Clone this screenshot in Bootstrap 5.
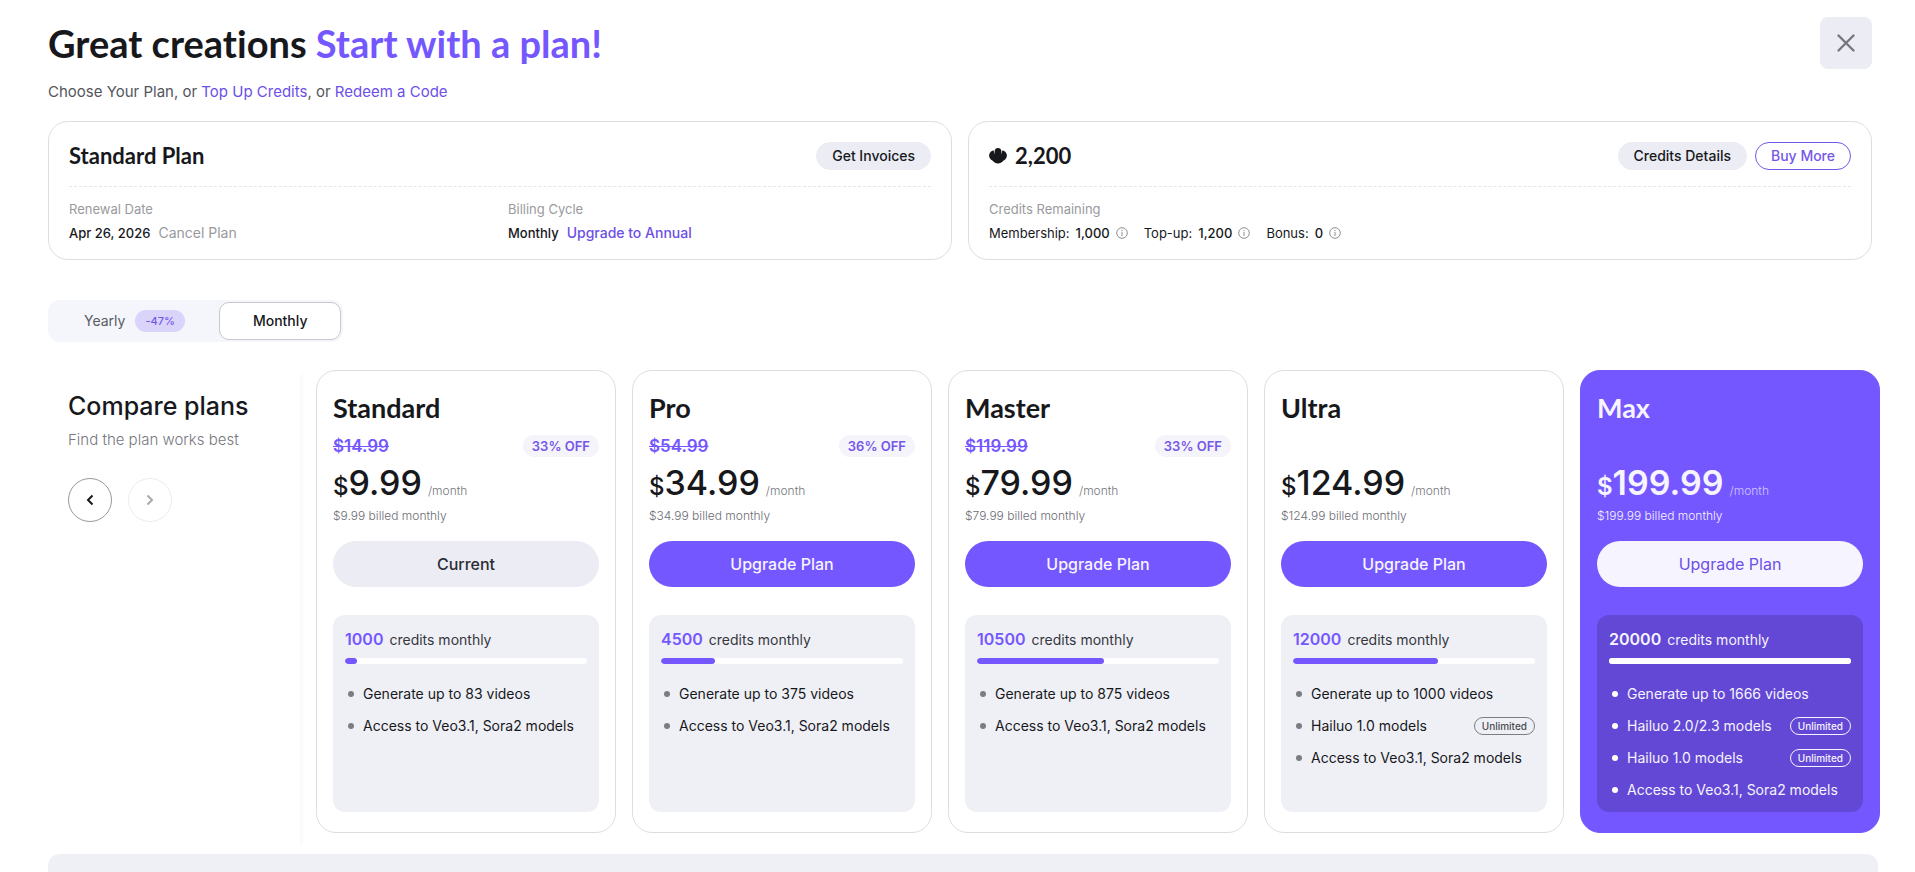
<!DOCTYPE html>
<html lang="en">
<head>
<meta charset="utf-8">
<meta name="viewport" content="width=device-width, initial-scale=1">
<title>Plans</title>
<link href="https://cdn.jsdelivr.net/npm/bootstrap@5.3.0/dist/css/bootstrap.min.css" rel="stylesheet">
<style>
:root{--brand:#7557ff;--ink:#17181c;--soft:#ebecf4;--panel:#eff0f6;--line:#dedee0;--dim:#999a9e}
body{font-family:Inter,"Liberation Sans",sans-serif;font-size:14px;line-height:20px;color:var(--ink);background:#fff}
a{color:#6c4fe8;text-decoration:none}
.display-face{font-family:Lato,"Open Sans",sans-serif;font-weight:700;font-variant-ligatures:none}
.page-top{padding:17px 43px 0 48px}
.page-title{font-size:38px;line-height:52px}
.brand-text{color:var(--brand)}
.intro{font-size:15px;line-height:20px;color:#55565c;margin:13px 0 19px}
.close-btn{width:52px;height:52px;border-radius:8px;background:var(--soft);color:#76777d}
.account{border:1px solid var(--line);border-radius:20px;padding:20px 20px 16px}
.account-title{font-size:22px;line-height:28px}
.pill-btn{height:28px;padding:0 15px;border-radius:14px;font-size:14px;line-height:26px;font-weight:500;background:var(--soft);border:1px solid var(--soft);color:var(--ink)}
.pill-btn.hollow{background:#fff;border-color:#7557e8;color:#7557e8}
.dash{border-top:1px dashed #e6e6ea;margin:16px 0 12px}
.dim{color:var(--dim)}
.fact{font-size:13px;line-height:20px}
.fact strong,.fact a{font-weight:500}
.fact a{font-size:14px}
.balances{gap:16px}
.balances span{gap:6px}
.cycle{background:#f4f6fb;border-radius:12px;padding:2px;margin:40px 0 0 48px}
.cycle label{height:38px;padding:0 33px;border:1px solid transparent;border-radius:10px;font-size:14px;color:#5a5b62;cursor:pointer}
.cycle .btn-check:checked+label{background:#fff;border-color:#c8c9cd;color:var(--ink);font-weight:500}
.save-tag{background:#dad4fb;color:#7557e8;border-radius:11px;margin-left:10px;padding:0 10px;font-size:11px;line-height:22px;font-weight:500}
.plans{display:grid;grid-template-columns:252px repeat(5,minmax(0,1fr));gap:16px;padding:0 35px 0 48px;margin-top:28px}
.compare{padding:20px 0 0 20px;margin-bottom:-16px;box-shadow:6px 0 4px -4px #f7f7f8}
.compare h2{font-size:25px;line-height:32px;font-weight:500;margin:0 0 8px}
.compare p{font-size:15px;line-height:20px;font-weight:300;color:#76777d;margin:0 0 28px}
.round-btn{width:44px;height:44px;border:1px solid #98999d;color:var(--ink)}
.round-btn:disabled{border-color:#ececee;color:#a8a9ad;opacity:1}
.plan{border:1px solid var(--line);border-radius:20px;padding:20px 16px;background:#fff}
.plan h3{font-size:27px;line-height:34px;margin:0}
.was{height:22px;margin:10px 0 8px;font-size:17px;font-weight:600;color:var(--brand)}
.off-tag{background:#f4f4fa;color:#7557e8;border-radius:11px;padding:0 9px;font-size:13px;line-height:22px;font-weight:600}
.price{height:36px;line-height:36px;font-weight:500}
.price .sign{font-size:24px}
.price .sum{font-size:34px}
.price .per{font-size:12px;font-weight:300;color:#76777d;margin-left:6px}
.billed{font-size:12px;line-height:20px;font-weight:300;color:#6c6d73;margin:5px 0 15px}
.plan-btn{height:46px;border:0;border-radius:23px;font-size:16px;font-weight:500;background:var(--brand);color:#f6f4ff}
.plan-btn.current{background:var(--soft);color:#2c2d33;opacity:1}
.perks{background:var(--panel);border-radius:12px;padding:14px 12px 10px;margin-top:28px;min-height:197px}
.credits{font-size:14px;line-height:20px;color:#36373d}
.credits strong{font-size:16px;font-weight:600;color:var(--brand);margin-right:6px}
.meter{height:6px;border-radius:3px;background:#fff;margin:8px 0 20px}
.meter .progress-bar{background:var(--brand);border-radius:3px}
.perks ul{gap:12px}
.perks li{font-size:14px;line-height:20px}
.perks li::before{content:"";width:6px;height:6px;border-radius:50%;background:#7c7d82;margin:0 9px 0 3px}
.free-tag{border:1px solid #7c7d82;border-radius:9px;padding:0 7px;font-size:10px;line-height:16px;font-weight:500;color:#4a4b51}
.plan.top{background:var(--brand);border-color:var(--brand);color:#f6f4ff}
.top .billed,.top .credits,.top .credits strong{color:#f6f4ff}
.top .price{font-weight:600}
.top .price .per{color:#cfc6ff}
.top .plan-btn{background:#f6f5ff;color:#6c4fe8;font-weight:400}
.top .perks{background:#6248d4}
.top .meter .progress-bar,.top li::before{background:#fff}
.top .free-tag{border-color:#f6f4ff;color:#f6f4ff}
.next-panel{background:var(--panel);border-radius:12px 12px 0 0;margin:21px 37px 0 48px;min-height:18px}
</style>
</head>
<body class="d-flex flex-column min-vh-100">
<header class="page-top">
  <div class="d-flex justify-content-between align-items-start">
    <h1 class="page-title display-face m-0">Great creations <span class="brand-text">Start with a plan!</span></h1>
    <button type="button" class="btn p-0 close-btn d-flex align-items-center justify-content-center" aria-label="Close">
      <svg width="20" height="20" viewBox="0 0 20 20" fill="none" stroke="currentColor" stroke-width="2.4" stroke-linecap="round"><path d="M2.5 2.5l15 15M17.5 2.5l-15 15"/></svg>
    </button>
  </div>
  <p class="intro">Choose Your Plan, or <a href="#topup">Top Up Credits</a>, or <a href="#redeem">Redeem a Code</a></p>
  <div class="row gx-3">
    <section class="col-6">
      <div class="account">
        <div class="d-flex justify-content-between align-items-center">
          <h2 class="account-title display-face m-0">Standard Plan</h2>
          <button type="button" class="btn pill-btn">Get Invoices</button>
        </div>
        <div class="dash"></div>
        <div class="row gx-3 fact">
          <div class="col-6"><div class="dim mb-1">Renewal Date</div><strong>Apr 26, 2026</strong><a class="dim ms-2 fw-normal" href="#cancel">Cancel Plan</a></div>
          <div class="col-6"><div class="dim mb-1">Billing Cycle</div><strong>Monthly</strong><a class="ms-2" href="#annual">Upgrade to Annual</a></div>
        </div>
      </div>
    </section>
    <section class="col-6">
      <div class="account">
        <div class="d-flex justify-content-between align-items-center">
          <h2 class="account-title display-face m-0 d-flex align-items-center gap-2">
            <svg width="18" height="16" viewBox="0 0 18 16" fill="#17181c"><path d="M9 0C10.800 0 12.200 1.200 12.400 2.800L12.100 6.500L13.400 2.600C15.200 2.600 17.600 4.600 17.900 7C18.100 9.400 16.600 11.600 14.600 12.600C13 14.600 11 15.600 9 15.600C7 15.600 5 14.600 3.400 12.600C1.400 11.600-.1 9.400.1 7C.4 4.600 2.800 2.600 4.600 2.600L5.900 6.500L5.600 2.800C5.800 1.200 7.200 0 9 0Z"/></svg>2,200</h2>
          <div class="d-flex gap-2">
            <button type="button" class="btn pill-btn">Credits Details</button>
            <button type="button" class="btn pill-btn hollow">Buy More</button>
          </div>
        </div>
        <div class="dash"></div>
        <div class="fact">
          <div class="dim mb-1">Credits Remaining</div>
          <div class="balances d-flex">
            <span class="d-flex align-items-center">Membership: <strong>1,000</strong><svg width="12" height="12" viewBox="0 0 12 12" fill="none" stroke="#8e8f94"><circle cx="6" cy="6" r="5.300"/><path d="M6 3v1.200M6 5v4"/></svg></span>
            <span class="d-flex align-items-center">Top-up: <strong>1,200</strong><svg width="12" height="12" viewBox="0 0 12 12" fill="none" stroke="#8e8f94"><circle cx="6" cy="6" r="5.300"/><path d="M6 3v1.200M6 5v4"/></svg></span>
            <span class="d-flex align-items-center">Bonus: <strong>0</strong><svg width="12" height="12" viewBox="0 0 12 12" fill="none" stroke="#8e8f94"><circle cx="6" cy="6" r="5.300"/><path d="M6 3v1.200M6 5v4"/></svg></span>
          </div>
        </div>
      </div>
    </section>
  </div>
</header>

<div class="cycle d-flex align-self-start" role="group" aria-label="Billing period">
  <input type="radio" class="btn-check" name="cycle" id="yearly">
  <label for="yearly" class="d-flex align-items-center">Yearly <span class="save-tag">-47%</span></label>
  <input type="radio" class="btn-check" name="cycle" id="monthly" checked>
  <label for="monthly" class="d-flex align-items-center">Monthly</label>
</div>

<main class="plans">
  <section class="compare">
    <h2>Compare plans</h2>
    <p>Find the plan works best</p>
    <div class="d-flex gap-3">
      <button type="button" class="btn p-0 rounded-circle round-btn d-flex align-items-center justify-content-center" aria-label="Previous plans"><svg width="12" height="12" viewBox="0 0 12 12" fill="none" stroke="currentColor" stroke-width="2"><path d="M8.500 1.500L4 6l4.500 4.500"/></svg></button>
      <button type="button" class="btn p-0 rounded-circle round-btn d-flex align-items-center justify-content-center" aria-label="Next plans" disabled><svg width="12" height="12" viewBox="0 0 12 12" fill="none" stroke="currentColor" stroke-width="2"><path d="M3.500 1.500L8 6l-4.500 4.500"/></svg></button>
    </div>
  </section>

  <article class="plan">
    <h3 class="display-face">Standard</h3>
    <div class="was d-flex justify-content-between align-items-center"><s>$14.99</s><span class="off-tag">33% OFF</span></div>
    <div class="price"><span class="sign">$</span><span class="sum">9.99</span><span class="per">/month</span></div>
    <p class="billed">$9.99 billed monthly</p>
    <button type="button" class="btn w-100 plan-btn current" disabled>Current</button>
    <div class="perks">
      <div class="credits d-flex align-items-baseline"><strong>1000</strong>credits monthly</div>
      <div class="progress meter"><div class="progress-bar" style="width:5%"></div></div>
      <ul class="list-unstyled d-flex flex-column m-0">
        <li class="d-flex align-items-center">Generate up to 83 videos</li>
        <li class="d-flex align-items-center">Access to Veo3.1, Sora2 models</li>
      </ul>
    </div>
  </article>

  <article class="plan">
    <h3 class="display-face">Pro</h3>
    <div class="was d-flex justify-content-between align-items-center"><s>$54.99</s><span class="off-tag">36% OFF</span></div>
    <div class="price"><span class="sign">$</span><span class="sum">34.99</span><span class="per">/month</span></div>
    <p class="billed">$34.99 billed monthly</p>
    <button type="button" class="btn w-100 plan-btn">Upgrade Plan</button>
    <div class="perks">
      <div class="credits d-flex align-items-baseline"><strong>4500</strong>credits monthly</div>
      <div class="progress meter"><div class="progress-bar" style="width:22.5%"></div></div>
      <ul class="list-unstyled d-flex flex-column m-0">
        <li class="d-flex align-items-center">Generate up to 375 videos</li>
        <li class="d-flex align-items-center">Access to Veo3.1, Sora2 models</li>
      </ul>
    </div>
  </article>

  <article class="plan">
    <h3 class="display-face">Master</h3>
    <div class="was d-flex justify-content-between align-items-center"><s>$119.99</s><span class="off-tag">33% OFF</span></div>
    <div class="price"><span class="sign">$</span><span class="sum">79.99</span><span class="per">/month</span></div>
    <p class="billed">$79.99 billed monthly</p>
    <button type="button" class="btn w-100 plan-btn">Upgrade Plan</button>
    <div class="perks">
      <div class="credits d-flex align-items-baseline"><strong>10500</strong>credits monthly</div>
      <div class="progress meter"><div class="progress-bar" style="width:52.5%"></div></div>
      <ul class="list-unstyled d-flex flex-column m-0">
        <li class="d-flex align-items-center">Generate up to 875 videos</li>
        <li class="d-flex align-items-center">Access to Veo3.1, Sora2 models</li>
      </ul>
    </div>
  </article>

  <article class="plan">
    <h3 class="display-face">Ultra</h3>
    <div class="was"></div>
    <div class="price"><span class="sign">$</span><span class="sum">124.99</span><span class="per">/month</span></div>
    <p class="billed">$124.99 billed monthly</p>
    <button type="button" class="btn w-100 plan-btn">Upgrade Plan</button>
    <div class="perks">
      <div class="credits d-flex align-items-baseline"><strong>12000</strong>credits monthly</div>
      <div class="progress meter"><div class="progress-bar" style="width:60%"></div></div>
      <ul class="list-unstyled d-flex flex-column m-0">
        <li class="d-flex align-items-center">Generate up to 1000 videos</li>
        <li class="d-flex align-items-center">Hailuo 1.0 models<span class="free-tag ms-auto">Unlimited</span></li>
        <li class="d-flex align-items-center">Access to Veo3.1, Sora2 models</li>
      </ul>
    </div>
  </article>

  <article class="plan top">
    <h3 class="display-face">Max</h3>
    <div class="was"></div>
    <div class="price"><span class="sign">$</span><span class="sum">199.99</span><span class="per">/month</span></div>
    <p class="billed">$199.99 billed monthly</p>
    <button type="button" class="btn w-100 plan-btn">Upgrade Plan</button>
    <div class="perks">
      <div class="credits d-flex align-items-baseline"><strong>20000</strong>credits monthly</div>
      <div class="progress meter"><div class="progress-bar" style="width:100%"></div></div>
      <ul class="list-unstyled d-flex flex-column m-0">
        <li class="d-flex align-items-center">Generate up to 1666 videos</li>
        <li class="d-flex align-items-center">Hailuo 2.0/2.3 models<span class="free-tag ms-auto">Unlimited</span></li>
        <li class="d-flex align-items-center">Hailuo 1.0 models<span class="free-tag ms-auto">Unlimited</span></li>
        <li class="d-flex align-items-center">Access to Veo3.1, Sora2 models</li>
      </ul>
    </div>
  </article>
</main>
<div class="next-panel flex-grow-1"></div>
<script src="https://cdn.jsdelivr.net/npm/bootstrap@5.3.0/dist/js/bootstrap.bundle.min.js"></script>
</body>
</html>
